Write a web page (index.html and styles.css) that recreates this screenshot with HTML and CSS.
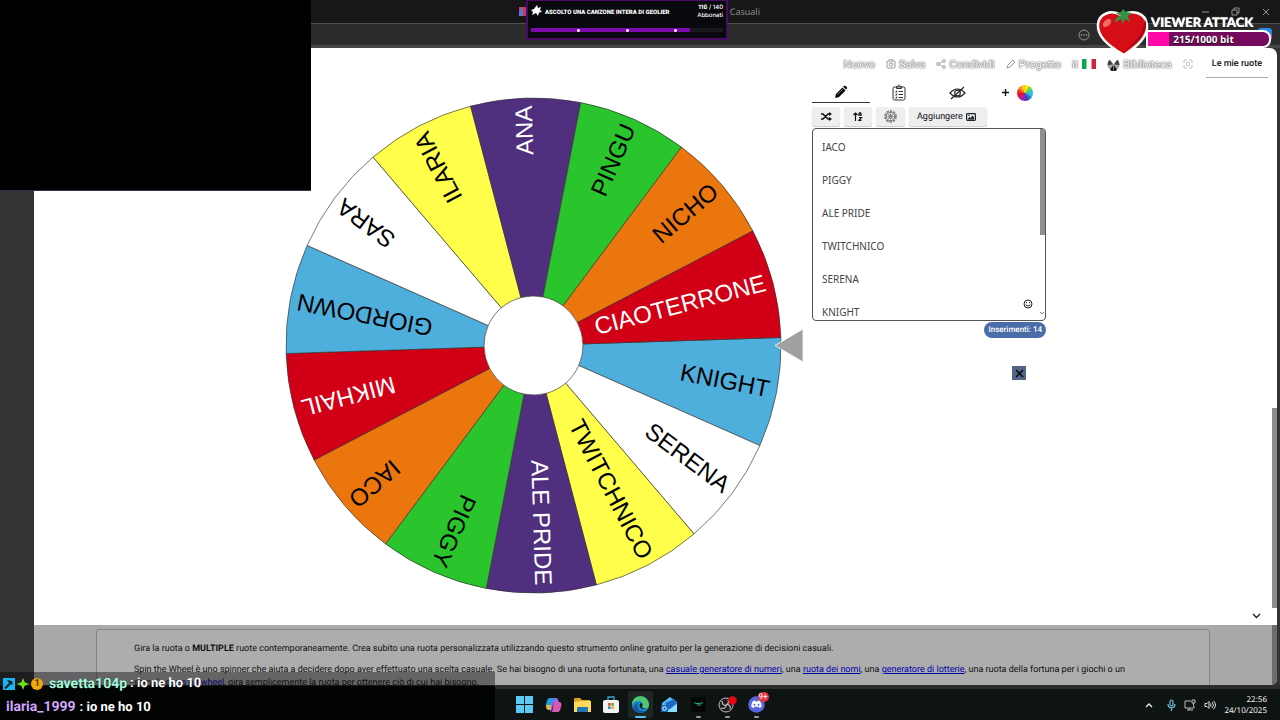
FILE: index.html
```html
<!DOCTYPE html>
<html lang="it">
<head>
<meta charset="utf-8">
<meta name="viewport" content="width=device-width, initial-scale=1">
<title>Ruota delle Scelte Casuali</title>
<link rel="stylesheet" href="styles.css">
</head>
<body>
<div class="screen">
  <header class="chrome">
    <div class="tabs-row">
      <div class="tab-title"><svg width="9" height="9" viewBox="0 0 9 9"><path fill="#c33b54" d="M0 0h9v9H0z"/><path fill="#6075d2" d="M0 4l4-4v9H0z"/></svg><span>Ruota delle Scelte Casuali</span></div>
      <svg class="win-controls" width="70" height="10" viewBox="0 0 70 10" fill="none" stroke="#929292"><path d="M2 5h7M32 3h5v5h-5zM34 3V1h5v5h-2M63 2l6 6M69 2l-6 6"/></svg>
    </div>
    <div class="toolbar"><svg width="12" height="12" viewBox="0 0 12 12" fill="#a0a0a0"><circle cx="6" cy="6" r="5" fill="none" stroke="#929292"/><circle cx="3.5" cy="6" r=".8"/><circle cx="6" cy="6" r=".8"/><circle cx="8.5" cy="6" r=".8"/></svg><svg class="copilot" width="14" height="14" viewBox="0 0 14 14"><path fill="#2d86e8" d="M3 0h8q3 0 3 3v5H0V3q0-3 3-3z"/><path fill="#a24fd8" d="M5 6h9v4q-1 4-4 4H5z"/></svg></div>
  </header>

  <div class="viewport">
    <div class="page">
      <nav class="nav">
        <a href="#n">Nuovo</a>
        <a href="#s"><svg width="10" height="10" viewBox="0 0 10 10" fill="#fff" stroke="#999"><rect x="1" y="2" width="8" height="7" rx="1"/><path d="M3 2V.8h4V2"/><circle cx="5" cy="5.5" r="1.7"/></svg>Salva</a>
        <a href="#c"><svg width="10" height="10" viewBox="0 0 10 10" fill="#fff" stroke="#999" stroke-width=".9"><path d="M8 2L2 5l6 3"/><circle cx="2" cy="5" r="1.4"/><circle cx="8" cy="2" r="1.4"/><circle cx="8" cy="8" r="1.4"/></svg>Condividi</a>
        <a href="#p"><svg width="10" height="10" viewBox="0 0 10 10" fill="#fff" stroke="#999"><path d="M1 9l1-3 5-5 2 2-5 5z"/></svg>Progetto</a>
        <a href="#l">it<svg class="flag" width="14" height="10" viewBox="0 0 14 10"><path fill="#fff" d="M0 0h14v10H0z"/><path fill="#12a350" d="M0 0h4.500v10H0z"/><path fill="#ca2440" d="M9.500 0H14v10H9.500z"/></svg></a>
        <a href="#b"><svg width="13" height="13" viewBox="0 0 13 13"><circle cx="6.500" cy="6.500" r="6" fill="#999"/><path fill="#111" d="M6.500 6.500L3 12a6 6 0 0 0 7 0z"/><path fill="#444" d="M6.500 6.500L.5 7a6 6 0 0 1 2-5zM6.500 6.500l6 .5a6 6 0 0 0-2-5z"/><path fill="#fff" d="M6.500 6.500L3 1.500a6 6 0 0 1 7 0z"/><path stroke="#ccc" stroke-width=".6" d="M6.500 6.500v6M6.500 6.500l-5 3M6.500 6.500l5 3"/></svg>Biblioteca</a>
        <a href="#f" aria-label="Schermo intero"><svg width="10" height="10" viewBox="0 0 10 10" fill="none" stroke="#c4c4c4"><path d="M1 4V1h3M6 1h3v3M9 6v3H6M4 9H1V6M3.500 3.500h3v3h-3z"/></svg></a>
        <a class="mine" href="#m">Le mie ruote</a>
      </nav>

      <main class="work">
        <svg class="wheel" viewBox="0 0 520 500" role="img" aria-label="Ruota">
          <defs><path id="w" stroke="#333" stroke-opacity=".75" stroke-width=".8" d="M48.260-11.010L241.300-55.070A247.500 247.500 0 0 1 241.300 55.070L48.260 11.010A49.500 49.500 0 0 0 48.260-11.010Z"/></defs>
          <g transform="translate(249.500 249.500)">
            <g transform="rotate(11)"><use href="#w" fill="#4eaedc"/><text x="240" y="6">KNIGHT</text></g>
            <g transform="rotate(36.710)"><use href="#w" fill="#fff"/><text x="240" y="6">SERENA</text></g>
            <g transform="rotate(62.430)"><use href="#w" fill="#ffff4b"/><text x="240" y="6">TWITCHNICO</text></g>
            <g transform="rotate(88.140)"><use href="#w" fill="#502f7e"/><text class="light" x="240" y="6">ALE PRIDE</text></g>
            <g transform="rotate(113.860)"><use href="#w" fill="#2ac52d"/><text x="240" y="6">PIGGY</text></g>
            <g transform="rotate(139.570)"><use href="#w" fill="#eb760e"/><text x="240" y="6">IACO</text></g>
            <g transform="rotate(165.290)"><use href="#w" fill="#d20016"/><text class="light" x="240" y="6">MIKHAIL</text></g>
            <g transform="rotate(191)"><use href="#w" fill="#4eaedc"/><text x="240" y="6">GIORDOWN</text></g>
            <g transform="rotate(216.710)"><use href="#w" fill="#fff"/><text x="240" y="6">SARA</text></g>
            <g transform="rotate(242.430)"><use href="#w" fill="#ffff4b"/><text x="240" y="6">ILARIA</text></g>
            <g transform="rotate(268.140)"><use href="#w" fill="#502f7e"/><text class="light" x="240" y="6">ANA</text></g>
            <g transform="rotate(293.860)"><use href="#w" fill="#2ac52d"/><text x="240" y="6">PINGU</text></g>
            <g transform="rotate(319.570)"><use href="#w" fill="#eb760e"/><text x="240" y="6">NICHO</text></g>
            <g transform="rotate(345.290)"><use href="#w" fill="#d20016"/><text class="light" x="240" y="6">CIAOTERRONE</text></g>
          </g>
          <path d="M491 249.500L519 233v33z" fill="#a0a0a0" stroke="#fff" stroke-width=".8"/>
        </svg>

        <section class="panel">
          <div class="modes">
            <button class="mode active" aria-label="Modifica"><svg width="14" height="14" viewBox="0 0 14 14"><path d="M1 13l1-4 6.500-6.500 3 3L5 12z"/><path d="M9.200 1.800l1-1c1-.8 3.600 1.500 2.700 2.800l-.9 1z"/><path d="M3.500 9.500l5.500-5.500" stroke="#aaa" stroke-width=".7"/></svg></button>
            <button class="mode" aria-label="Elenco"><svg width="14" height="17" viewBox="0 0 14 17" fill="none" stroke="#333"><rect x="1" y="3" width="12" height="13" rx="1.500"/><path d="M4.500 4.500v-2h1.500c0-2 2-2 2 0h1.500v2zM3 7.500l1 1 1-2M3 10.500l1 1 1-2M3 13.500l1 1 1-2M6.500 7.500H11M6.500 10.500H11M6.500 13.500H11"/></svg></button>
            <button class="mode" aria-label="Nascondi"><svg width="17" height="14" viewBox="0 0 17 14" fill="none" stroke="#222" stroke-width="1.200"><path d="M1 7q7.500-8 15 0-7.500 8-15 0zM2 13L15 1"/><circle cx="8.500" cy="7" r="2.800"/></svg></button>
            <button class="add" aria-label="Aggiungi ruota"><svg width="7" height="7" viewBox="0 0 7 7" stroke="#111" stroke-width="1.400"><path d="M3.500 0v7M0 3.500h7"/></svg><span class="rainbow"></span></button>
          </div>
          <div class="actions">
            <button class="chip" aria-label="Mescola"><svg width="11" height="9" viewBox="0 0 11 9" fill="none" stroke="#111" stroke-width="1.500"><path d="M0 2h2l5 5h2M0 7h2l5-5h2"/><path d="M8 0l3 2-3 2zM8 5l3 2-3 2z" fill="#111" stroke="none"/></svg></button>
            <button class="chip" aria-label="Ordina"><svg width="10" height="9" viewBox="0 0 10 9" fill="none" stroke="#111" stroke-width="1.200"><path d="M2.500 9V1M.5 3l2-2 2 2M6 4V1.500l1-1 1 1V4M6 3h2M6 5.500h2.500L6 8.300h2.500"/></svg></button>
            <button class="chip gear" aria-label="Impostazioni"><svg width="13" height="13" viewBox="0 0 13 13" fill="none" stroke="#777"><circle cx="6.500" cy="6.500" r="5.500" stroke-width="1.500" stroke-dasharray="2.500 1"/><circle cx="6.500" cy="6.500" r="4.200"/><circle cx="6.500" cy="6.500" r="1.800"/><path d="M6.500 2.500v8M2.500 6.500h8M4 4l5 5M9 4L4 9" stroke-width=".6"/></svg></button>
            <button class="chip">Aggiungere <svg width="10" height="8" viewBox="0 0 10 8"><rect x=".6" y=".6" width="8.800" height="6.800" rx=".8" fill="none" stroke="#222" stroke-width="1.200"/><path fill="#222" d="M2 6.500v-1l1.500-1.500 1 1 2-2.500L8 4.500v2z"/><circle cx="3" cy="2.500" r=".7"/></svg></button>
          </div>
          <div class="entries">
            <textarea class="entries-text" aria-label="Inserimenti" spellcheck="false">IACO
PIGGY
ALE PRIDE
TWITCHNICO
SERENA
KNIGHT</textarea>
            <span class="thumb"></span>
            <svg class="smile" width="10" height="10" viewBox="0 0 10 10" fill="none" stroke="#222"><circle cx="5" cy="5" r="4"/><path d="M2.500 5.800q2.500 2.500 5 0M3.500 3v1.200M6.500 3v1.200"/></svg>
            <svg class="arrow" width="6" height="4" viewBox="0 0 6 4" fill="none" stroke="#777"><path d="M1 1l2 2 2-2"/></svg>
          </div>
          <span class="count">Inserimenti: 14</span>
          <button class="dismiss" aria-label="Chiudi"><svg width="9" height="9" viewBox="0 0 9 9" stroke="#050505" stroke-width="1.500"><path d="M1 1l7 7M8 1L1 8"/></svg></button>
        </section>
        <svg class="more" width="9" height="6" viewBox="0 0 9 6" fill="none" stroke="#222" stroke-width="1.400"><path d="M1 1l3.500 3.500L8 1"/></svg>
      </main>

      <div class="info">
        <div class="info-card">
          <p>Gira la ruota o <b>MULTIPLE</b> ruote contemporaneamente. Crea subito una ruota personalizzata utilizzando questo strumento online gratuito per la generazione di decisioni casuali.</p>
          <p>Spin the Wheel è uno spinner che aiuta a decidere dopo aver effettuato una scelta casuale. Se hai bisogno di una ruota fortunata, una <a href="#1">casuale generatore di numeri</a>, una <a href="#2">ruota dei nomi</a>, una <a href="#3">generatore di lotterie</a>, una ruota della fortuna per i giochi o un semplice&nbsp;<a href="#4">yes no wheel</a>, gira semplicemente la ruota per ottenere ciò di cui hai bisogno.</p>
        </div>
      </div>
      <span class="page-thumb"></span>
    </div>
  </div>

  <footer class="taskbar">
    <div class="apps">
      <button class="app" aria-label="Start"><svg width="17" height="17" viewBox="0 0 17 17"><path fill="#5cc9f5" d="M0 0h8v8H0zM9 0h8v8H9zM0 9h8v8H0zM9 9h8v8H9z"/></svg></button>
      <button class="app" aria-label="Copilot"><svg width="17" height="16" viewBox="0 0 17 16"><path fill="#2799df" d="M5 1h5L7 10H2C0 9 1 7 2 4c.6-2 1-3 3-3z"/><path fill="#e9b83f" d="M1 8h6l-1 5H4C1 13 1 10 1 8z"/><path fill="#db58b5" d="M9 5h5c3 0 2.500 3 2 5-1 3-1 5-4 5H7z"/><path fill="#8f68ec" d="M9 1h2c2 0 2 2 3 4H9L6 15c-2-1 1-8 3-14z"/></svg></button>
      <button class="app" aria-label="File"><svg width="17" height="16" viewBox="0 0 17 16"><path fill="#dca026" d="M0 2q0-1 1-1h5l2 2h8v4H0z"/><path fill="#ffda59" d="M0 5l7-1h10v11H0z"/><path fill="#2276b5" d="M3 15v-4q0-1 1-1h9q1 0 1 1v4z"/></svg></button>
      <button class="app" aria-label="Store"><svg width="16" height="17" viewBox="0 0 16 17"><path fill="none" stroke="#38a5d8" stroke-width="1.300" d="M5 4V1h6v3"/><rect y="4" width="16" height="13" rx="2" fill="#f2f2f2"/><path fill="#ed4a34" d="M5 7h2.700v2.700H5z"/><path fill="#68ad36" d="M8.300 7H11v2.700H8.300z"/><path fill="#2c91d2" d="M5 10.300h2.700V13H5z"/><path fill="#f3b42f" d="M8.300 10.300H11V13H8.300z"/></svg></button>
      <button class="app current" aria-label="Edge"><svg width="17" height="17" viewBox="0 0 17 17"><circle cx="8.500" cy="8.500" r="8.500" fill="#168cce"/><path fill="#51c86c" d="M5 1c7-3 13 4 12 9-1 3-5 3-7 1 3-3-1-7-5-6-3 0-4 3-5 4 0-4 2-7 5-8z"/><path fill="#1555a2" d="M6 7c-2 3 0 8 5 8 2 0 3-1 5-2-3 5-12 5-14 0-1-3 1-6 4-6z"/><path fill="#111816" d="M9 7c-3 2-1 6 3 6h4c-3 0-7-1-6-3 1-1 0-3-1-3z"/></svg></button>
      <button class="app" aria-label="Posta"><svg width="17" height="16" viewBox="0 0 17 16"><path fill="#58bdf3" d="M1 6l8-6 7 5v10H1z"/><path fill="#1b68c5" d="M4 6l9-4 3 4-8 7z"/><path fill="#8cdcff" d="M16 7v8H5z"/><rect y="8" width="7" height="7" rx="1" fill="#1267b6"/><circle cx="3.500" cy="11.500" r="1.800" fill="none" stroke="#fff"/></svg></button>
      <button class="app open" aria-label="Monitor"><svg width="15" height="15" viewBox="0 0 15 15"><rect width="15" height="15" rx="2" fill="#050606"/><path d="M3 6h2l1 1 1-1 1 1 1-1h3M6 8h4" fill="none" stroke="#20ad8b"/></svg></button>
      <button class="app open" aria-label="OBS"><svg width="19" height="17" viewBox="0 0 19 17"><circle cx="8" cy="9" r="7" fill="#1b1b1b" stroke="#bdbdbd"/><path fill="none" stroke="#bdbdbd" stroke-width="1.200" d="M4 5c0 4 3 5 4 4 2-1 3-3 2-5M8 9c3-1 5 1 4 4M8 9c0 3-2 4-5 3"/><circle cx="14.500" cy="4.500" r="4.200" fill="#e40612"/></svg></button>
      <button class="app open" aria-label="Discord"><svg width="17" height="17" viewBox="0 0 17 17"><circle cx="8.500" cy="8.500" r="8.300" fill="#5865df"/><path fill="#fff" d="M5 5l2-.5.5 1h2l.5-1 2 .5c1 2 2 4 1.500 6l-2 1-1-1.300h-4l-1 1.300-2-1C3 9 4 7 5 5z"/><circle cx="6.500" cy="8.800" r="1" fill="#5865df"/><circle cx="10.500" cy="8.800" r="1" fill="#5865df"/></svg><span class="badge">9+</span></button>
    </div>
    <div class="tray">
      <svg width="8" height="6" viewBox="0 0 8 6" fill="none" stroke="#eee" stroke-width="1.300"><path d="M1 5l3-3 3 3"/></svg>
      <svg width="9" height="12" viewBox="0 0 9 12" fill="none" stroke="#71bdd7" stroke-width="1.200"><rect x="3" y="1" width="3" height="6" rx="1.500"/><path d="M1 5c0 5 7 5 7 0M4.500 9v3"/></svg>
      <svg width="12" height="12" viewBox="0 0 12 12" fill="none" stroke="#bbb"><path d="M7 2H1v7h9V7M3 11h6M5 9v2M8 1h3v3H8zM9.500 4v3"/></svg>
      <svg width="12" height="10" viewBox="0 0 12 10" fill="none" stroke="#ddd"><path d="M1 3.500h2l2-2v7l-2-2H1zM6.500 3.500q1 1.500 0 3M8 2q3 3 0 6M9.500.8q4 4.200 0 8.400"/></svg>
      <div class="clock"><span>22:56</span><span>24/10/2025</span></div>
    </div>
  </footer>

  <div class="cam"></div>

  <div class="goal">
    <div class="goal-head">
      <svg width="11" height="11" viewBox="0 0 11 11" fill="#fff"><path d="M6 0l1 3 3-1-1 3 2 2-3 .5L7 11 5 8 1 10l1-3-2-2 3-1z"/></svg>
      <strong>ASCOLTO UNA CANZONE INTERA DI GEOLIER</strong>
      <div class="goal-num"><span><b>116</b> / 140</span><span>Abbonati</span></div>
    </div>
    <div class="goal-bar"><span class="goal-fill"></span><i></i><i></i><i></i></div>
  </div>

  <div class="attack">
    <strong class="attack-title">VIEWER ATTACK</strong>
    <div class="attack-bar">215/1000 bit</div>
    <svg class="tomato" width="54" height="48" viewBox="0 0 54 48"><path d="M25 6C15 0 3 5 2 15c-1 12 9 21 26 31C43 36 52 27 51 16 50 4 37 0 25 6z" fill="#d50d17" stroke="#fff" stroke-width="2.500"/><path d="M49 10c5 14-8 24-21 33 9-8 20-18 21-33z" fill="#a80716"/><ellipse cx="11" cy="14" rx="5" ry="3" transform="rotate(-42 11 14)" fill="#f36b66"/><path d="M25 7l-5-3 5-1 2-3 3 3 6 1-4 3 2 6-5-3-2 5-2-5-7 4 3-6z" fill="#329448"/></svg>
  </div>

  <div class="chat">
    <div class="line first">
      <svg width="12" height="12" viewBox="0 0 12 12"><path fill="#18b6f2" d="M0 0h12v12H0z"/><path fill="#07212e" d="M4 2l5 1 1 4-2-1-5 5-2-1 5-5z"/></svg>
      <svg width="12" height="12" viewBox="0 0 12 12"><path fill="#72df1d" d="M6 0l1.700 4.300L12 6 7.700 7.700 6 12 4.300 7.700 0 6l4.300-1.700z"/></svg>
      <span class="coin">1</span>
      <b class="mint">savetta104p</b><b class="msg">: io ne ho 10</b>
    </div>
    <div class="line"><b class="lilac">ilaria_1999</b><b class="msg">: io ne ho 10</b></div>
  </div>
</div>
</body>
</html>
```

FILE: styles.css
```css
* { box-sizing: border-box; }
body { margin: 0; font-family: Roboto, "Liberation Sans", sans-serif; font-size: 10px; color: #111; background: #0e1412; text-rendering: geometricPrecision; }
button { border: 0; padding: 0; background: none; font: inherit; color: inherit; text-rendering: inherit; }
svg { flex: none; }
.screen { position: relative; display: flex; flex-direction: column; height: 100vh; min-height: 600px; overflow: hidden; }

.chrome { background: #2b2b2b; border-bottom: 3px solid #454545; }
.tabs-row { display: flex; align-items: center; justify-content: space-between; height: 24px; padding: 0 10px 0 519px; background: #171717; border-bottom: 1px solid #505050; }
.tab-title { display: flex; align-items: center; justify-content: space-between; width: 241px; color: #8c8c8c; font: 9px "Noto Sans", sans-serif; }
.toolbar { display: flex; align-items: center; justify-content: flex-end; height: 21px; padding-right: 8px; }
.copilot { margin-left: 168px; }

.viewport { flex: 1; min-height: 0; display: flex; padding: 0 3px 0 34px; background: #333; }
.page { position: relative; flex: 1; min-width: 0; display: flex; flex-direction: column; background: #fff; border-radius: 0 7px 7px 0; overflow: hidden; }

.nav { display: flex; justify-content: flex-end; align-items: center; gap: 11px; height: 30px; padding-right: 9px; font-size: 11px; }
.nav a { display: flex; align-items: center; gap: 3px; padding-top: 2px; color: #fff; text-decoration: none; text-shadow: 0 0 1px #666, 0 0 1px #777, 0 0 2px #888; }
.nav .flag { margin-left: 1px; }
.nav .mine { align-self: stretch; margin-left: 2px; padding: 3px 6px 0; border-bottom: 1px solid #aaa; color: #111; font-size: 9px; font-weight: 500; text-shadow: none; }

.work { position: relative; flex: 1; min-height: 0; display: grid; grid-template-columns: 250px minmax(0, 520px) 234px; column-gap: 8px; align-content: start; margin-left: -8px; }
.wheel { grid-column: 2; width: 100%; margin-top: 18px; }
.wheel text { font: 24px "Liberation Sans", Arial, sans-serif; text-anchor: end; fill: #000; }
.wheel .light { fill: #fff; }
.more { position: absolute; right: 16px; bottom: 6px; }

.panel { display: flex; flex-direction: column; padding-top: 4px; }
.modes { display: flex; height: 21px; }
.mode { display: flex; align-items: center; justify-content: center; width: 58px; }
.mode.active { border-bottom: 1px solid #333; }
.add { display: flex; align-items: center; gap: 8px; margin-left: 16px; }
.rainbow { width: 16px; height: 16px; border-radius: 50%; background: conic-gradient(#ffe900 0 30deg, #76d536 30deg 60deg, #34c9b0 60deg 90deg, #35b5f0 90deg 120deg, #2878dd 120deg 150deg, #493bbd 150deg 180deg, #8c2bb5 180deg 210deg, #ce1870 210deg 240deg, #df1033 240deg 270deg, #f33b20 270deg 300deg, #ff8d1e 300deg 330deg, #ffc52c 330deg); }
.actions { display: flex; gap: 4px; margin-top: 4px; }
.chip { display: flex; align-items: center; justify-content: center; gap: 3px; min-width: 28px; height: 19px; padding: 0 8px; border-radius: 3px; background: #edeef0; box-shadow: 0 1px 1px #ccc; font-size: 9px; }
.chip:last-child { padding: 0 11px 0 8px; }
.entries { position: relative; display: flex; margin-top: 2px; }
.entries-text { flex: 1; height: 193px; padding: 2px 12px 0 9px; border: 1px solid #555; border-radius: 4px; resize: none; overflow: hidden; font: 10px/33px "Noto Sans", "Open Sans", sans-serif; color: #444; background: #fff; }
.thumb { position: absolute; top: 1px; right: 1px; width: 5px; height: 106px; border-radius: 0 3px 0 0; background: #8f8f8f; }
.smile { position: absolute; right: 13px; bottom: 12px; }
.arrow { position: absolute; right: 1px; bottom: 6px; }
.count { align-self: flex-end; margin-top: 1px; padding: 0 4px; border-radius: 8px; background: #4a6ca8; color: #fff; font-size: 8px; font-weight: 500; line-height: 16px; }
.dismiss { display: flex; align-items: center; justify-content: center; align-self: flex-end; width: 14px; height: 14px; margin: 28px 20px 0 0; background: #526587; }

.info { height: 60px; padding: 4px 62px 0 62px; border-right: 5px solid #6c6c6c; background: #a9a9ac; overflow: hidden; }
.info-card { min-height: 200px; padding: 13px 37px; border: 1px solid #868686; border-radius: 3px; background: #adadad; font-size: 9px; }
.info p { margin: 0 0 8px; line-height: 13px; }
.info a { color: #0000a8; }
.page-thumb { position: absolute; right: 0; bottom: 77px; width: 5px; height: 200px; background: #8b8b8b; }

.taskbar { display: grid; grid-template-columns: 1fr auto 1fr; align-items: center; height: 35px; background: #0e1412; border-top: 4px solid #2a2d2b; }
.apps { grid-column: 2; display: flex; gap: 4px; }
.app { position: relative; display: flex; align-items: center; justify-content: center; width: 25px; height: 27px; border-radius: 3px; }
.current { background: #1f2724; }
.open::after, .current::after { content: ""; position: absolute; left: 10px; bottom: 0; width: 5px; height: 2px; border-radius: 1px; background: #969b99; }
.current::after { left: 7px; width: 11px; background: #58c1eb; }
.badge { position: absolute; top: 1px; right: 0; width: 11px; border-radius: 6px; background: #df3545; color: #fff; font-size: 8px; line-height: 10px; text-align: center; }
.tray { display: flex; align-items: center; justify-content: flex-end; gap: 8px; padding-right: 13px; color: #eee; }
.tray > :first-child { margin-right: 6px; }
.clock { display: flex; flex-direction: column; align-items: flex-end; font: 8px/11px "Noto Sans", sans-serif; }

.cam { position: absolute; left: 0; top: 0; width: 311px; height: 191px; background: #000; border-bottom: 1px solid #32304e; }

.goal { position: absolute; left: 526px; top: 0; width: 202px; height: 40px; padding: 4px 3px; border: 2px solid #4b0a66; border-top-width: 1px; background: #09080c; color: #fff; font-family: Inter, sans-serif; }
.goal-head { display: flex; align-items: flex-start; gap: 3px; height: 23px; }
.goal-head strong { flex: 1; font: 900 6px/15px Roboto, sans-serif; white-space: nowrap; }
.goal-num { display: flex; flex-direction: column; align-items: flex-end; margin-top: -1px; font-size: 6px; line-height: 8px; font-weight: 500; }
.goal-bar { position: relative; display: flex; justify-content: space-evenly; align-items: center; height: 4px; background: #19181c; }
.goal-fill { position: absolute; left: 0; top: 0; width: 83%; height: 100%; background: #7d0bad; }
.goal-bar i { position: relative; width: 3px; height: 3px; border-radius: 50%; background: #fff; }

.attack { position: absolute; top: 8px; right: 9px; width: 175px; height: 50px; padding: 6px 0 0 50px; color: #fff; }
.attack-title { display: block; padding-left: 5px; font: 900 13px/16px Lato, sans-serif; white-space: nowrap; text-shadow: 0 0 1px #fff, 0 1px 1px #000; }
.attack-bar { height: 18px; padding-right: 10px; border: 2px solid #fff; border-radius: 0 8px 8px 0; background: linear-gradient(90deg, #ff0aa9 0 17%, #75095d 17%); font: bold 10px/14px "Open Sans", sans-serif; text-align: center; text-shadow: 0 1px 1px #000; }
.tomato { position: absolute; left: 0; top: 1px; }

.chat { position: absolute; left: 0; bottom: 0; width: 495px; height: 48px; background: linear-gradient(rgba(0,0,0,.42) 0 14px, #020303 14px); color: #fff; font-size: 14px; }
.line { display: flex; align-items: center; gap: 4px; height: 24px; padding-left: 6px; }
.first { gap: 2px; height: 23px; padding-left: 3px; }
.coin { width: 12px; height: 12px; border-radius: 50%; background: #f3a70d; color: #5b3600; font-size: 10px; line-height: 12px; font-weight: 700; text-align: center; }
.mint { margin: 0 1px 0 4px; color: #a4fadf; }
.lilac { color: #d4a7ff; }
.msg { font-size: 13px; }
.line b { text-shadow: 0 1px 1px #000; }
```
